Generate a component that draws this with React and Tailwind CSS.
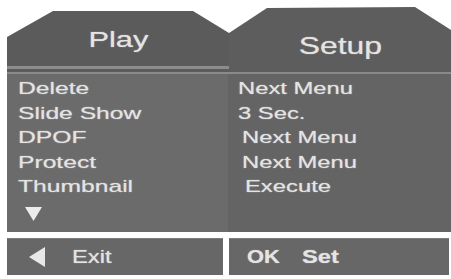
export default function App() {
  const left = ["Delete", "Slide Show", "DPOF", "Protect", "Thumbnail"];
  const right = [
    { text: "Next Menu", pad: "pl-[10px]" },
    { text: "3 Sec.", pad: "pl-[10px]" },
    { text: "Next Menu", pad: "pl-[14px]" },
    { text: "Next Menu", pad: "pl-[14px]" },
    { text: "Execute", pad: "pl-[17px]" },
  ];
  const glow = "[text-shadow:0_0_1px_rgba(255,255,255,0.6)]";

  return (
    <div className="w-[451px] h-[279px] bg-white overflow-hidden font-['Liberation_Sans',Arial,sans-serif] text-[#e4e4e4]">
      {/* tabs */}
      <div className="flex pt-[7px] pl-[7px]">
        <div className="w-[222px] pt-[4px]">
          <div className="h-[55px] bg-[#5b5b5b] [clip-path:polygon(46px_0,186px_0,222px_22px,222px_100%,0_100%,0_26px)] flex justify-center pt-[17px]">
            <span className={`inline-block text-[22px] leading-[23px] scale-x-[1.4] ${glow}`}>
              Play
            </span>
          </div>
          <div className="h-[3px] bg-[#8d8d8d]" />
          <div className="h-[3px] bg-[#5b5b5b]" />
        </div>
        <div className="w-[222px] h-[65px] bg-[#5d5d5d] [clip-path:polygon(38px_1px,186px_0,222px_23px,222px_100%,0_100%,0_26px)] flex justify-center pt-[27px]">
          <span className={`inline-block text-[24px] leading-[24px] scale-x-[1.33] ${glow}`}>
            Setup
          </span>
        </div>
      </div>
      <div className="ml-[7px] h-[2px] bg-[#8a8a8a]" />

      {/* body */}
      <div className="ml-[7px] h-[158px] flex">
        <div className="w-[221px] bg-[#6b6b6b] pt-[3px] pl-[11px]">
          {left.map((t) => (
            <div key={t} className="h-[24.5px] text-[17px] leading-[24.5px]">
              <span className={`inline-block origin-left scale-x-[1.45] ${glow}`}>{t}</span>
            </div>
          ))}
          <svg width="17" height="16" viewBox="0 0 17 16" className="ml-[7px] mt-[6px]">
            <polygon points="0,1 17,1 8.5,15" fill="#ececec" />
          </svg>
        </div>
        <div className="flex-1 bg-[#646464] pt-[3px]">
          {right.map((r, i) => (
            <div key={i} className={`h-[24.5px] text-[17px] leading-[24.5px] ${r.pad}`}>
              <span className={`inline-block origin-left scale-x-[1.4] ${glow}`}>{r.text}</span>
            </div>
          ))}
        </div>
      </div>

      {/* footer */}
      <div className="flex mt-[6px] ml-[7px] gap-[6px]">
        <div className="w-[216px] h-[37px] bg-[#676767] border-t border-[#7c7c7c] flex items-center pl-[21px]">
          <svg width="17" height="20" viewBox="0 0 17 20">
            <polygon points="17,0 17,20 1,10" fill="#e8e8e8" />
          </svg>
          <span className={`inline-block ml-[27px] text-[19px] origin-left scale-x-[1.25] ${glow}`}>
            Exit
          </span>
        </div>
        <div className="w-[220px] h-[37px] bg-[#676767] border-t border-[#7c7c7c] flex items-center pl-[18px]">
          <span className={`inline-block text-[19px] font-bold origin-left scale-x-[1.15] ${glow}`}>
            OK
          </span>
          <span className={`inline-block ml-[26px] text-[19px] font-bold origin-left scale-x-[1.25] ${glow}`}>
            Set
          </span>
        </div>
      </div>
    </div>
  );
}
